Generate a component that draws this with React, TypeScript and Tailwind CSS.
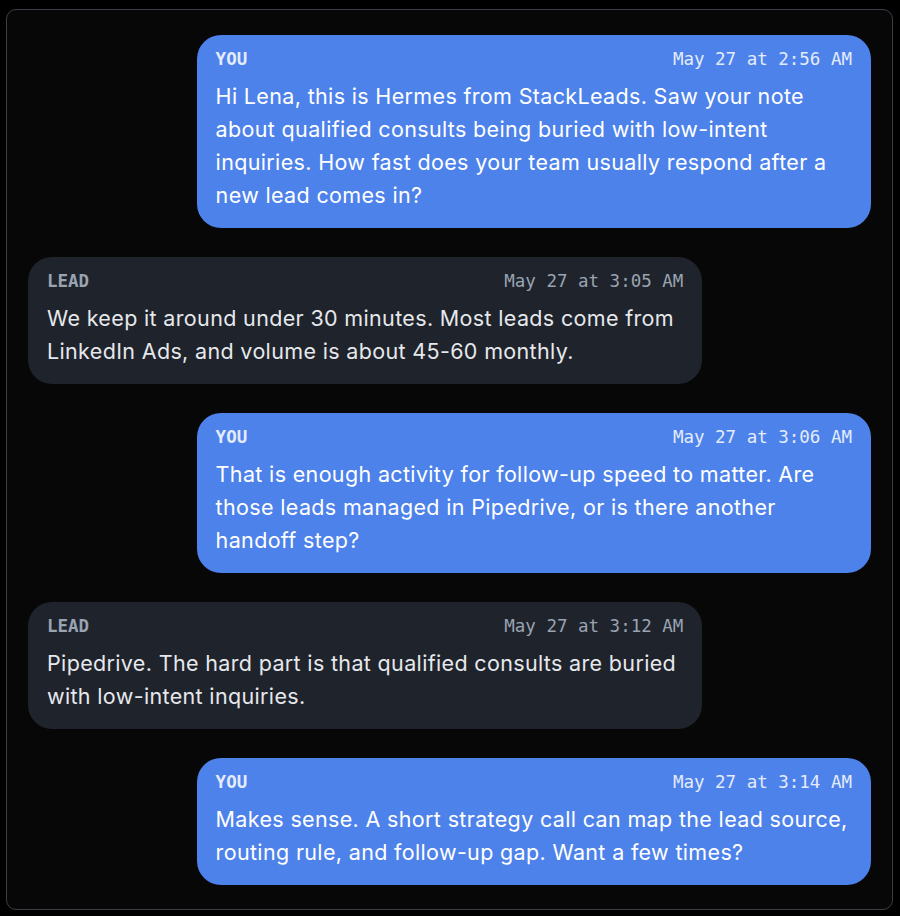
import React from 'react';

type Msg = { from: 'you' | 'lead'; time: string; text: string };

const MESSAGES: Msg[] = [
  {
    from: 'you',
    time: 'May 27 at 2:56 AM',
    text: 'Hi Lena, this is Hermes from StackLeads. Saw your note about qualified consults being buried with low-intent inquiries. How fast does your team usually respond after a new lead comes in?',
  },
  {
    from: 'lead',
    time: 'May 27 at 3:05 AM',
    text: 'We keep it around under 30 minutes. Most leads come from LinkedIn Ads, and volume is about 45-60 monthly.',
  },
  {
    from: 'you',
    time: 'May 27 at 3:06 AM',
    text: 'That is enough activity for follow-up speed to matter. Are those leads managed in Pipedrive, or is there another handoff step?',
  },
  {
    from: 'lead',
    time: 'May 27 at 3:12 AM',
    text: 'Pipedrive. The hard part is that qualified consults are buried with low-intent inquiries.',
  },
  {
    from: 'you',
    time: 'May 27 at 3:14 AM',
    text: 'Makes sense. A short strategy call can map the lead source, routing rule, and follow-up gap. Want a few times?',
  },
];

// --- 单条消息气泡 ---
const Bubble: React.FC<{ msg: Msg }> = ({ msg }) => {
  const mine = msg.from === 'you';
  return (
    <div className={`flex ${mine ? 'justify-end' : 'justify-start'}`}>
      <div
        className={`w-[80%] rounded-[24px] pl-[19px] pr-[19px] pt-[14px] pb-[16px] ${
          mine ? 'bg-[#4d82eb] text-white' : 'bg-[#1f232b] text-[#e6e8ec]'
        }`}
      >
        <div className="flex items-center justify-between h-[20px] font-['DejaVu_Sans_Mono',monospace] text-[17.5px]">
          <span className={`font-bold ${mine ? 'text-[#e4ecfc]' : 'text-[#9aa3b2]'}`}>
            {mine ? 'YOU' : 'LEAD'}
          </span>
          <span className={mine ? 'text-[#e4ecfc]' : 'text-[#9aa3b2]'}>{msg.time}</span>
        </div>
        <p className="mt-[11px] font-['Inter',sans-serif] text-[21.5px] leading-[33px] tracking-[0.016em]">
          {msg.text}
        </p>
      </div>
    </div>
  );
};

export default function App() {
  return (
    <div className="w-[900px] h-[916px] bg-black pt-[9px] pl-[6px] pr-[7px]">
      <div className="h-[901px] rounded-[10px] border border-[#3a3f47] bg-[#070707] px-[21px] pt-[25px] flex flex-col gap-[29px]">
        {MESSAGES.map((m, i) => (
          <Bubble key={i} msg={m} />
        ))}
      </div>
    </div>
  );
}
